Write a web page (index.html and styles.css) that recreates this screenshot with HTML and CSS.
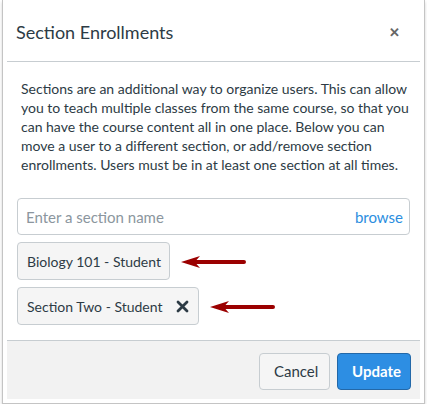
FILE: index.html
```html
<!DOCTYPE html>
<html>
<head>
<meta charset="utf-8">
<link rel="stylesheet" href="styles.css">
</head>
<body>
<div class="dialog">
  <div class="header">
    <h2 class="title">Section Enrollments</h2>
    <span class="close">&#x2715;</span>
  </div>
  <div class="body">
    <p class="desc">Sections are an additional way to organize users. This can allow you to teach multiple classes from the same course, so that you can have the course content all in one place. Below you can move a user to a different section, or add/remove section enrollments. Users must be in at least one section at all times.</p>
    <div class="search">
      <span class="placeholder">Enter a section name</span>
      <span class="browse">browse</span>
    </div>
    <div class="chip-row">
      <div class="chip">Biology 101 - Student</div>
      <svg class="arrow" width="66" height="14" viewBox="0 0 66 14"><path d="M0 7 L19 1 L15.5 5 L63 5 A2 2 0 0 1 63 9 L15.5 9 L19 13 Z" fill="#9b0000"/></svg>
    </div>
    <div class="chip-row last">
      <div class="chip">Section Two - Student <svg class="x" width="13" height="13" viewBox="0 0 13 13"><path d="M2 2 L11 11 M11 2 L2 11" stroke="#2d3b45" stroke-width="2.8" stroke-linecap="round"/></svg></div>
      <svg class="arrow" width="66" height="14" viewBox="0 0 66 14"><path d="M0 7 L19 1 L15.5 5 L63 5 A2 2 0 0 1 63 9 L15.5 9 L19 13 Z" fill="#9b0000"/></svg>
    </div>
  </div>
  <div class="footer">
    <button class="btn cancel">Cancel</button>
    <button class="btn update">Update</button>
  </div>
</div>
</body>
</html>
```
FILE: styles.css
```css
html, body { margin: 0; padding: 0; background: #fff; }
body { font-family: Lato, "Liberation Sans", sans-serif; color: #2d3b45; }
.dialog {
  margin: 0 2px;
  width: 423px;
  box-sizing: border-box;
  border: 1px solid #c4c4c4;
  border-top: none;
  padding: 0 4px 4px 4px;
  box-shadow: 0 2px 3px rgba(0,0,0,0.18);
}
.header {
  height: 62px;
  display: flex;
  align-items: center;
  justify-content: space-between;
  border-bottom: 1px solid #c7cdd1;
  padding: 2px 20px 0 9px;
  box-sizing: border-box;
}
.title { margin: 0; font-size: 18px; font-weight: 400; color: #2d3b45; }
.close { font-size: 13px; color: #666; font-weight: 700; }
.body { padding: 17px 10px 15px 10px; }
.desc { margin: 0 0 24px 4px; font-size: 14px; line-height: 19px; color: #2d3b45; }
.search {
  height: 37px;
  box-sizing: border-box;
  border: 1px solid #c7cdd1;
  border-radius: 4px;
  display: flex;
  align-items: center;
  justify-content: space-between;
  padding: 0 6px 0 8px;
  font-size: 15px;
  margin-bottom: 7px;
}
.placeholder { color: #8b969e; }
.browse { color: #2b8ee0; }
.chip-row { display: flex; align-items: center; gap: 11px; margin-bottom: 7px; }
.chip-row.last { margin-bottom: 0; }
.chip {
  height: 38px;
  box-sizing: border-box;
  background: #f5f5f5;
  border: 1px solid #c7cdd1;
  border-radius: 4px;
  display: flex;
  align-items: center;
  gap: 13px;
  padding: 0 8px 0 9px;
  font-size: 14px;
  color: #2d3b45;
}
.x { display: block; margin-right: 1px; }
.arrow { display: block; margin-top: 1px; }
.footer {
  background: #f2f2f2;
  border-top: 1px solid #c7cdd1;
  height: 59px;
  box-sizing: border-box;
  display: flex;
  align-items: center;
  justify-content: flex-end;
  gap: 7px;
  padding: 0 9px 0 0;
}
.btn {
  height: 37px;
  box-sizing: border-box;
  border-radius: 4px;
  font-family: Lato, "Liberation Sans", sans-serif;
  font-size: 15px;
  padding: 0 14px;
  margin-top: 2px;
}
.cancel { background: #f5f5f5; border: 1px solid #c7cdd1; color: #2d3b45; width: 71px; }
.update { background: #2d8ee3; border: 1px solid #2368a8; color: #fff; font-weight: 700; width: 74px; }
```
